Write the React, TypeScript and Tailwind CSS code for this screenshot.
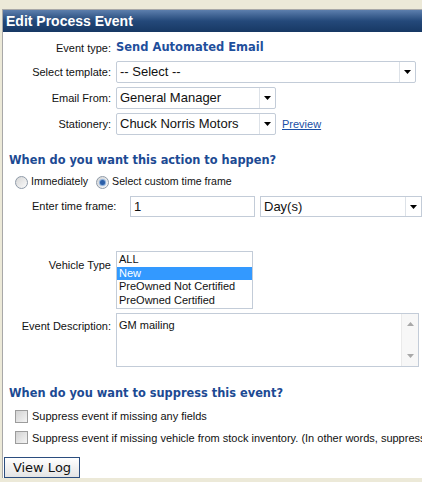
import React from 'react'

const sans = { fontFamily: '"Liberation Sans", Arial, sans-serif' }
const verdana = { fontFamily: '"DejaVu Sans", Verdana, sans-serif' }

function Arrow() {
  return (
    <svg width="7" height="4" viewBox="0 0 7 4" className="block">
      <path d="M0 0 L7 0 L3.5 4 Z" fill="#000" />
    </svg>
  )
}

function Select({ value, width }: { value: string; width: string }) {
  return (
    <div className={`flex h-[22px] ${width} items-stretch rounded-[2px] border border-[#c3ccd8] bg-white`}>
      <div className="flex flex-1 items-center overflow-hidden whitespace-nowrap pl-[3px] text-[13px] text-[#111]">{value}</div>
      <div className="flex w-[16px] items-center justify-center border-l border-[#dde2e8]">
        <Arrow />
      </div>
    </div>
  )
}

function Radio({ checked }: { checked?: boolean }) {
  return (
    <span className="flex h-[13px] w-[13px] items-center justify-center rounded-full border border-[#8e9aa8] bg-gradient-to-br from-[#d6d6d6] to-[#fbfbfb]">
      {checked && <span className="h-[5px] w-[5px] rounded-full bg-[#2c5fa8] shadow-[0_0_1px_1px_#7ea6d8]" />}
    </span>
  )
}

function Checkbox() {
  return <span className="h-[13px] w-[13px] shrink-0 border border-[#9c9c9c] bg-gradient-to-br from-[#d2d2d2] to-[#f4f4f4]" />
}

function Row({ label, children, className = '' }: { label: string; children: React.ReactNode; className?: string }) {
  return (
    <div className={`flex items-center ${className}`}>
      <div className="w-[113px] shrink-0 pr-[5px] text-right text-[11px] text-[#111]">{label}</div>
      {children}
    </div>
  )
}

export default function App() {
  const vehicleTypes = ['ALL', 'New', 'PreOwned Not Certified', 'PreOwned Certified']

  return (
    <div className="h-[482px] w-[422px] overflow-hidden bg-[#ece9d8] pt-[9px] pl-[2px]" style={sans}>
      <div className="h-[469px] overflow-hidden border-l border-t border-[#a8a8a8] bg-white">
        {/* title bar */}
        <div className="flex h-[22px] items-center bg-gradient-to-b from-[#5d7fad] via-[#24497a] to-[#173864] pl-[3px] text-[14px] font-bold text-white">
          Edit Process Event
        </div>

        <Row label="Event type:" className="mt-[8px] h-[16px]">
          <span className="text-[11.5px] font-bold text-[#1f4f9c]" style={verdana}>
            Send Automated Email
          </span>
        </Row>

        <Row label="Select template:" className="mt-[5px]">
          <Select value="-- Select --" width="w-[300px]" />
        </Row>

        <Row label="Email From:" className="mt-[4px]">
          <Select value="General Manager" width="w-[160px]" />
        </Row>

        <Row label="Stationery:" className="mt-[4px]">
          <Select value="Chuck Norris Motors" width="w-[160px]" />
          <a className="ml-[6px] text-[11px] text-[#1a4fa6] underline">Preview</a>
        </Row>

        <div className="mt-[17px] pl-[6px] text-[11.4px] font-bold text-[#1c4a93]" style={verdana}>
          When do you want this action to happen?
        </div>

        <div className="mt-[5px] flex items-center pl-[12px] text-[10.6px] text-[#111]">
          <Radio />
          <span className="ml-[3px]">Immediately</span>
          <span className="ml-[8px]">
            <Radio checked />
          </span>
          <span className="ml-[3px]">Select custom time frame</span>
        </div>

        <div className="mt-[6px] flex items-center">
          <div className="w-[127px] shrink-0 pl-[29px] text-[11px] text-[#111]">Enter time frame:</div>
          <div className="flex h-[21px] w-[129px] items-center border border-[#c3ccd8] pl-[3px] text-[13px] text-[#111]">1</div>
          <div className="ml-[5px] flex h-[21px] w-[162px] shrink-0 items-stretch border border-[#c3ccd8] bg-white">
            <div className="flex flex-1 items-center pl-[3px] text-[13px] text-[#111]">Day(s)</div>
            <div className="flex w-[16px] items-center justify-center border-l border-[#dde2e8]">
              <Arrow />
            </div>
          </div>
        </div>

        <div className="mt-[34px] flex items-start">
          <div className="w-[113px] shrink-0 pr-[5px] pt-[6px] text-right text-[11px] text-[#111]">Vehicle Type</div>
          <div className="w-[137px] border border-[#c3ccd8] py-[1px]">
            {vehicleTypes.map((t) => (
              <div
                key={t}
                className={`h-[13.5px] pl-[2px] text-[11px] leading-[13.5px] ${t === 'New' ? 'bg-[#3399ff] text-white' : 'text-[#111]'}`}
              >
                {t}
              </div>
            ))}
          </div>
        </div>

        <div className="mt-[4px] flex items-start">
          <div className="w-[113px] shrink-0 pr-[5px] pt-[5px] text-right text-[11px] text-[#111]">Event Description:</div>
          <div className="flex h-[54px] w-[303px] border border-[#c3ccd8]">
            <div className="flex-1 pl-[2px] pt-[3px] text-[11px] text-[#111]">GM mailing</div>
            <div className="flex w-[17px] flex-col items-center justify-between border-l border-[#eaeaea] bg-[#f7f7f7] py-[8px]">
              <svg width="7" height="4" viewBox="0 0 7 4"><path d="M0 4 L7 4 L3.5 0 Z" fill="#a8a8a8" /></svg>
              <svg width="7" height="4" viewBox="0 0 7 4"><path d="M0 0 L7 0 L3.5 4 Z" fill="#a8a8a8" /></svg>
            </div>
          </div>
        </div>

        <div className="mt-[18px] pl-[6px] text-[11.4px] font-bold text-[#1c4a93]" style={verdana}>
          When do you want to suppress this event?
        </div>

        <div className="mt-[6px] flex items-center pl-[12px] text-[11px] text-[#111]">
          <Checkbox />
          <span className="ml-[4px] whitespace-nowrap">Suppress event if missing any fields</span>
        </div>

        <div className="mt-[5px] flex items-center pl-[12px] text-[11px] text-[#111]">
          <Checkbox />
          <span className="ml-[4px] whitespace-nowrap">
            Suppress event if missing vehicle from stock inventory. (In other words, suppress event if vehicle is sold.)
          </span>
        </div>

        <button
          className="mt-[11px] ml-[1px] flex h-[21px] w-[76px] items-center justify-center border border-[#2b4d7e] bg-gradient-to-b from-[#ffffff] to-[#e4e4e4] text-[13px] text-[#111]"
          style={verdana}
        >
          View Log
        </button>
      </div>
    </div>
  )
}
